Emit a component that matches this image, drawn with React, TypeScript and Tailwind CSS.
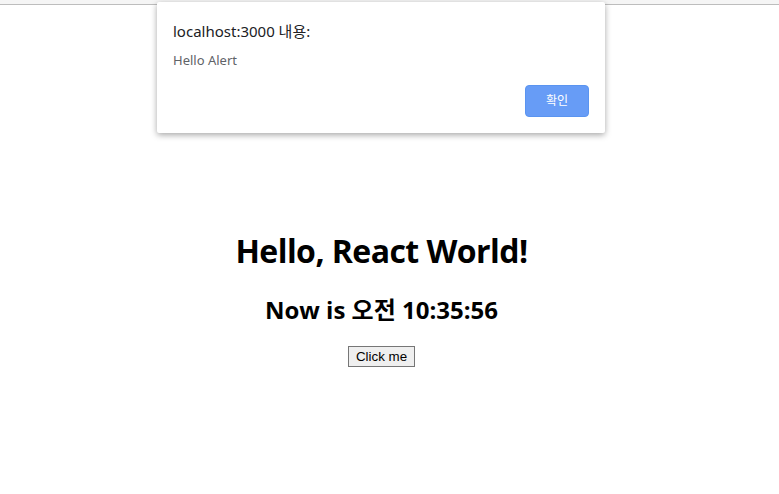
export default function App() {
  return (
    <div className="relative h-[494px] w-[779px] overflow-hidden bg-white">
      {/* browser edge */}
      <div className="h-[5px] border-b border-[#bdbdbd] bg-[#f5f5f5]" />

      {/* page */}
      <div className="flex flex-col items-center pr-[16px] pt-[226px] text-black" style={{ fontFamily: '"Open Sans", "Noto Sans CJK KR", sans-serif' }}>
        <h1 className="text-[32px] font-bold leading-[40px] tracking-[-0.55px]">Hello, React World!</h1>
        <h2 className="mt-[23px] text-[24px] font-bold leading-[32px]">Now is 오전 10:35:56</h2>
        <button
          className="mt-[20px] h-[21px] border border-[#767676] bg-[#efefef] px-[7px] text-[13.33px] leading-[19px] text-black"
          style={{ fontFamily: '"Liberation Sans", Arial, sans-serif' }}
        >
          Click me
        </button>
      </div>

      {/* alert dialog */}
      <div
        className="absolute left-[157px] top-[2px] h-[131px] w-[448px] rounded-[2px] bg-white shadow-[0_2px_6px_rgba(0,0,0,0.35)]"
        style={{ fontFamily: '"Noto Sans", "Noto Sans CJK KR", sans-serif' }}
      >
        <div className="px-[16px] pt-[18px]">
          <div className="text-[15px] leading-[22px] text-[#202124]">localhost:3000 내용:</div>
          <div className="mt-[10px] text-[13px] leading-[16px] text-[#5f6368]">Hello Alert</div>
        </div>
        <div className="absolute bottom-[16px] right-[16px]">
          <button className="h-[32px] w-[64px] rounded-[4px] border border-[#5a94f0] bg-[#679cf6] text-[12px] text-white">
            확인
          </button>
        </div>
      </div>
    </div>
  );
}
